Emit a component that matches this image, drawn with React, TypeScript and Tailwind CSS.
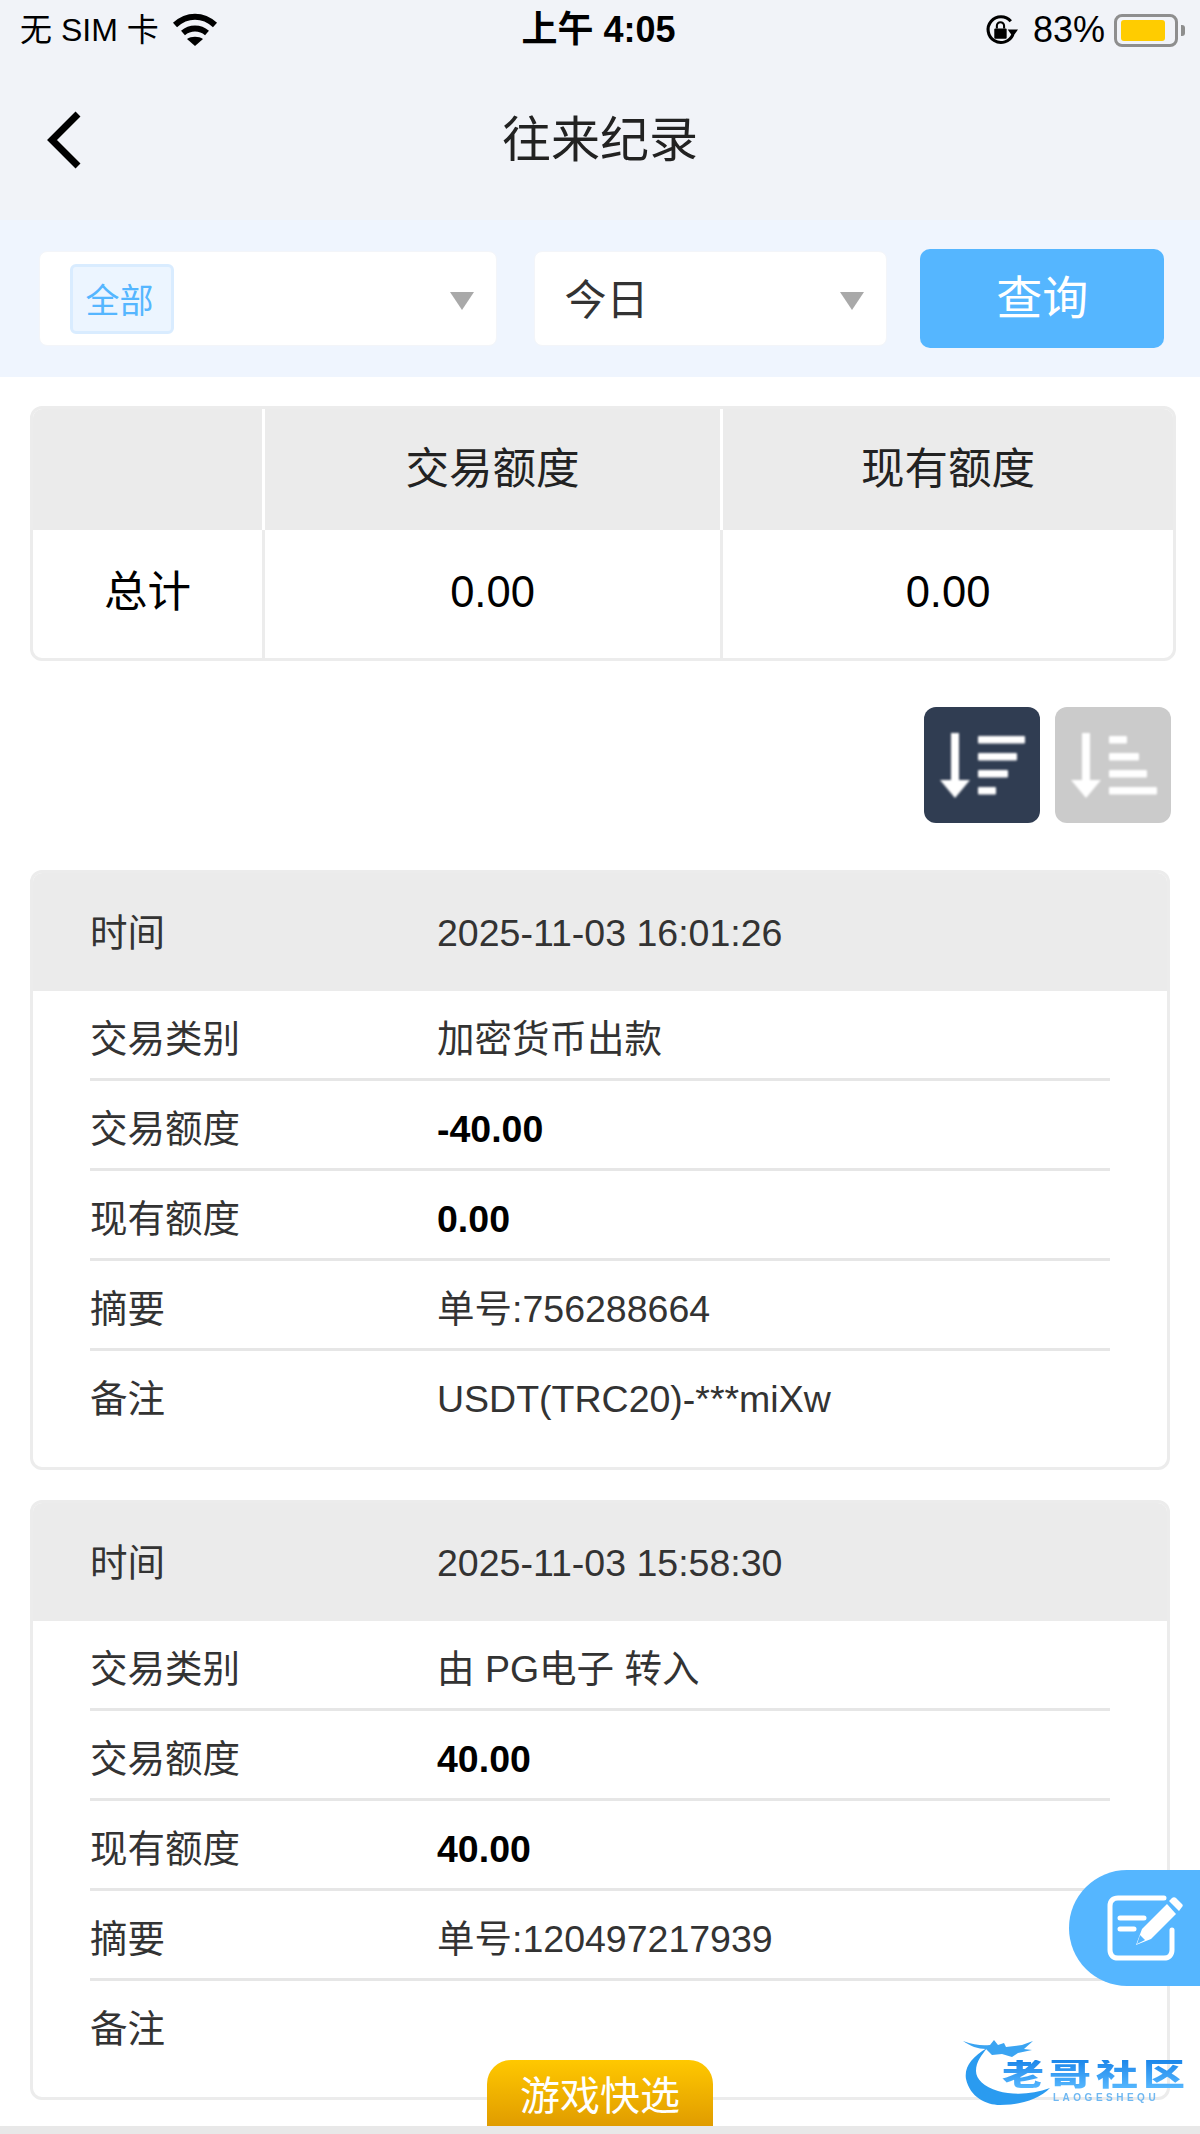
import React from 'react'

const FONT = "font-['Liberation_Sans','Noto_Sans_CJK_SC',sans-serif]"

type Row = { label: string; value: string; bold?: boolean }

const records: { time: string; rows: Row[] }[] = [
  {
    time: '2025-11-03 16:01:26',
    rows: [
      { label: '交易类别', value: '加密货币出款' },
      { label: '交易额度', value: '-40.00', bold: true },
      { label: '现有额度', value: '0.00', bold: true },
      { label: '摘要', value: '单号:756288664' },
      { label: '备注', value: 'USDT(TRC20)-***miXw' },
    ],
  },
  {
    time: '2025-11-03 15:58:30',
    rows: [
      { label: '交易类别', value: '由 PG电子 转入' },
      { label: '交易额度', value: '40.00', bold: true },
      { label: '现有额度', value: '40.00', bold: true },
      { label: '摘要', value: '单号:120497217939' },
      { label: '备注', value: '' },
    ],
  },
]

const StatusBar = () => (
  <div className="flex h-[60px] items-center justify-between pl-[20px] pr-[15px] text-[32px] leading-none text-black">
    <div className="flex w-[300px] items-center gap-[12px]">
      <span>无 SIM 卡</span>
      <svg width="48" height="36" viewBox="0 0 48 36" fill="none" stroke="#000" strokeWidth="6">
        <path d="M4 13C16 2 32 2 44 13" />
        <path d="M12 21C19 15 29 15 36 21" />
        <path d="M24 34L16 27C20 24 28 24 32 27Z" fill="#000" stroke="none" />
      </svg>
    </div>
    <span className="mr-[8px] text-[36px] font-bold">上午 4:05</span>
    <div className="flex w-[300px] items-center justify-end">
      <svg className="mr-[15px]" width="33" height="33" viewBox="0 0 32 32" fill="none">
        <path d="M27 20A12.500 12.500 0 1 1 25 7" stroke="#000" strokeWidth="3" />
        <path d="M22 15H32L27 22Z" fill="#000" />
        <rect x="9" y="14" width="12" height="10" rx="1" fill="#000" />
        <path d="M11.500 14V11.500A3.500 3.500 0 0 1 18.500 11.500V14" stroke="#000" strokeWidth="2" />
      </svg>
      <span className="mr-[9px] text-[36px]">83%</span>
      <div className="flex items-center gap-[3px]">
        <div className="flex h-[33px] w-[64px] items-center rounded-[8px] border-[3px] border-[#8e8e8e] px-[4px]">
          <div className="h-[21px] w-[44px] rounded-[3px] bg-[#ffcc00]" />
        </div>
        <div className="h-[11px] w-[4px] rounded-r-[3px] bg-[#8e8e8e]" />
      </div>
    </div>
  </div>
)

const Caret = () => (
  <svg width="24" height="18" viewBox="0 0 24 18" className="mt-[4px]">
    <path d="M0 0H24L12 18Z" fill="#a9a9a9" />
  </svg>
)

const SortIcon = ({ widths }: { widths: number[] }) => (
  <svg width="116" height="116" viewBox="0 0 116 116" fill="#fff" className="blur-[0.8px]">
    <rect x="27" y="26" width="8" height="48" />
    <path d="M16 73H46L31 91Z" />
    {widths.map((w, i) => (
      <rect key={i} x="54" y={29 + i * 17} width={w} height="7.500" rx="1" />
    ))}
  </svg>
)

const Card = ({ time, rows }: { time: string; rows: Row[] }) => (
  <div className="overflow-hidden rounded-[12px] border-[3px] border-[#ececec] bg-white pb-[26px] text-[37.500px] text-[#333]">
    <div className="flex h-[118px] items-center bg-[#ebebeb] pl-[57px] pt-[2px]">
      <span className="w-[347px]">时间</span>
      <span>{time}</span>
    </div>
    <div className="px-[57px]">
      {rows.map((r, i) => (
        <div
          key={r.label}
          className={`flex h-[90px] items-center border-b-[3px] pt-[9px] ${i < rows.length - 1 ? 'border-[#e6e6e6]' : 'border-transparent'}`}
        >
          <span className="w-[347px]">{r.label}</span>
          <span className={r.bold ? 'font-bold text-black' : ''}>{r.value}</span>
        </div>
      ))}
    </div>
  </div>
)

export default () => {
  return (
    <div className={`relative flex h-[2134px] w-full flex-col overflow-hidden bg-white ${FONT}`}>
      <header className="flex h-[220px] flex-col bg-[#f1f3f8]">
        <StatusBar />
        <div className="relative flex h-[160px] items-center justify-center">
          <svg className="absolute left-[44px] top-[49px]" width="40" height="62" viewBox="0 0 40 62" fill="none">
            <path d="M34 5L8 31L34 57" stroke="#000" strokeWidth="7" />
          </svg>
          <h1 className="text-[49px] font-normal leading-none text-[#222]">往来纪录</h1>
        </div>
      </header>

      <div className="flex h-[157px] items-center bg-[#eff5fe] pl-[39px] pr-[36px]">
        <div className="flex h-[95px] w-[458px] items-center justify-between rounded-[8px] border border-[#f3f5f9] bg-white pl-[30px] pr-[22px]">
          <span className="flex h-[70px] w-[104px] items-center justify-center rounded-[6px] border-[3px] border-[#d9ecff] bg-[#ecf5ff] pr-[5px] pt-[6px] text-[34px] text-[#55b6ff]">
            全部
          </span>
          <Caret />
        </div>
        <div className="ml-[37px] flex h-[95px] w-[354px] items-center justify-between rounded-[8px] border border-[#f3f5f9] bg-white pl-[30px] pr-[22px]">
          <span className="pt-[4px] text-[42px] text-[#333]">今日</span>
          <Caret />
        </div>
        <button className="ml-[33px] flex h-[99px] w-[244px] items-center justify-center rounded-[10px] bg-[#55b6ff] text-[46px] text-white">
          查询
        </button>
      </div>

      <main className="flex flex-col pl-[30px] pr-[24px] pt-[29px]">
        <div className="overflow-hidden rounded-[12px] border-[3px] border-[#ececec] text-black">
          <div className="flex h-[121px] bg-[#ebebeb] text-[43.500px] text-[#222]">
            <div className="w-[229px]" />
            <div className="flex w-[458px] items-center justify-center border-l-[3px] border-white">交易额度</div>
            <div className="flex flex-1 items-center justify-center border-l-[3px] border-white">现有额度</div>
          </div>
          <div className="flex h-[128px] text-[43.500px]">
            <div className="flex w-[229px] items-center justify-center pb-[2px]">总计</div>
            <div className="flex w-[458px] items-center justify-center border-l-[3px] border-[#ececec] pb-[2px]">0.00</div>
            <div className="flex flex-1 items-center justify-center border-l-[3px] border-[#ececec] pb-[2px]">0.00</div>
          </div>
        </div>

        <div className="mt-[46px] flex justify-end gap-[15px] pr-[5px]">
          <div className="rounded-[12px] bg-[#303d52]">
            <SortIcon widths={[47, 39, 30, 18]} />
          </div>
          <div className="rounded-[12px] bg-[#cbcbcb]">
            <SortIcon widths={[18, 30, 38, 48]} />
          </div>
        </div>

        <div className="mt-[47px] flex w-[1140px] flex-col gap-[30px]">
          {records.map((r) => (
            <Card key={r.time} time={r.time} rows={r.rows} />
          ))}
        </div>
      </main>

      {/* floating bits */}
      <div className="absolute right-0 top-[1870px] h-[116px] w-[131px] rounded-l-[58px] bg-[#55b6ff]">
        <svg width="131" height="116" viewBox="0 0 131 116" fill="none" stroke="#fff" strokeLinecap="round" strokeWidth="5">
          <path d="M95 28H49C44 28 41 31 41 36V80C41 85 44 88 49 88H95C100 88 103 85 103 80V60" />
          <path d="M51 48H75M51 59H65" />
          <path d="M67 75L73 59L98 34L107 44L82 69Z" fill="#fff" stroke="none" />
          <path d="M100 31L103 28C104 27 106 27 107 28L113 34C114 35 114 36 113 37L110 41Z" fill="#fff" stroke="none" />
          <path d="M68 74L71 65L76 70Z" fill="#55b6ff" stroke="none" />
        </svg>
      </div>

      <div className="absolute bottom-[8px] left-[487px] flex h-[66px] w-[226px] items-center justify-center rounded-t-[24px] bg-gradient-to-b from-[#ffc800] to-[#e09c00] pt-[6px] text-[40px] text-white">
        游戏快选
      </div>

      <div className="absolute left-[962px] top-[2033px] h-[74px] w-[222px] blur-[0.7px]">
        <svg className="absolute left-0 top-0" width="92" height="74" viewBox="0 0 92 74">
          <path d="M25 15C10 24 2 34 4 46C8 64 24 72 38 72C58 72 78 66 88 55C70 62 50 62 36 58C22 54 14 46 14 38C14 28 20 22 25 15Z" fill="#2a9bf0" />
          <path d="M1 8C12 12 20 13 28 12L32 7L36 12L42 10L44 14L60 12L71 8L62 16L70 17L56 20L50 24L40 21L30 22L24 16C16 16 8 13 1 8Z" fill="#3aa4f2" />
        </svg>
        <span className="absolute left-[40px] top-[27px] origin-top scale-y-[0.72] whitespace-nowrap bg-gradient-to-b from-[#1a86ea] to-[#58baff] bg-clip-text text-[42px] font-black leading-none tracking-[5px] text-transparent">
          老哥社区
        </span>
        <span className="absolute left-[91px] top-[60px] whitespace-nowrap text-[10px] font-bold leading-none tracking-[3.500px] text-[#6fb8f2]">
          LAOGESHEQU
        </span>
      </div>

      <div className="absolute bottom-0 left-0 h-[8px] w-full bg-[#e8e8e8]" />
    </div>
  )
}
